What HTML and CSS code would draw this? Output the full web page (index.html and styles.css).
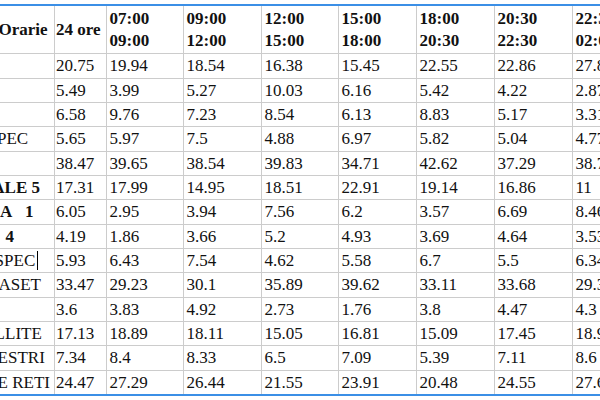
FILE: index.html
```html
<!DOCTYPE html>
<html lang="it">
<head>
<meta charset="utf-8">
<title>Share per fascia oraria</title>
<link rel="stylesheet" href="styles.css">
</head>
<body>
<div class="sheet">
  <table class="grid">
    <colgroup>
      <col class="c-label">
      <col class="c-day">
      <col class="c-slot">
      <col class="c-slot-w">
      <col class="c-slot">
      <col class="c-slot-w">
      <col class="c-slot-w">
      <col class="c-slot-w">
      <col class="c-slot-w">
    </colgroup>
    <thead>
      <tr>
        <th class="label cut-1">Orarie</th>
        <th class="day">24 ore</th>
        <th>07:00<br>09:00</th>
        <th>09:00<br>12:00</th>
        <th>12:00<br>15:00</th>
        <th>15:00<br>18:00</th>
        <th>18:00<br>20:30</th>
        <th>20:30<br>22:30</th>
        <th>22:30<br>02:00</th>
      </tr>
    </thead>
    <tbody>
      <tr><td class="label"></td><td class="day">20.75</td><td>19.94</td><td>18.54</td><td>16.38</td><td>15.45</td><td>22.55</td><td>22.86</td><td>27.81</td></tr>
      <tr><td class="label"></td><td class="day">5.49</td><td>3.99</td><td>5.27</td><td>10.03</td><td>6.16</td><td>5.42</td><td>4.22</td><td>2.87</td></tr>
      <tr><td class="label"></td><td class="day">6.58</td><td>9.76</td><td>7.23</td><td>8.54</td><td>6.13</td><td>8.83</td><td>5.17</td><td>3.31</td></tr>
      <tr><td class="label cut-3">PEC</td><td class="day">5.65</td><td>5.97</td><td>7.5</td><td>4.88</td><td>6.97</td><td>5.82</td><td>5.04</td><td>4.77</td></tr>
      <tr><td class="label"></td><td class="day">38.47</td><td>39.65</td><td>38.54</td><td>39.83</td><td>34.71</td><td>42.62</td><td>37.29</td><td>38.76</td></tr>
      <tr><td class="label strong cut-8">ALE 5</td><td class="day">17.31</td><td>17.99</td><td>14.95</td><td>18.51</td><td>22.91</td><td>19.14</td><td>16.86</td><td>11</td></tr>
      <tr><td class="label strong wide-gap">A 1</td><td class="day">6.05</td><td>2.95</td><td>3.94</td><td>7.56</td><td>6.2</td><td>3.57</td><td>6.69</td><td>8.46</td></tr>
      <tr><td class="label strong indent">4</td><td class="day">4.19</td><td>1.86</td><td>3.66</td><td>5.2</td><td>4.93</td><td>3.69</td><td>4.64</td><td>3.53</td></tr>
      <tr><td class="label cut-5">SPEC<span class="caret"></span></td><td class="day">5.93</td><td>6.43</td><td>7.54</td><td>4.62</td><td>5.58</td><td>6.7</td><td>5.5</td><td>6.34</td></tr>
      <tr><td class="label cut-1">ASET</td><td class="day">33.47</td><td>29.23</td><td>30.1</td><td>35.89</td><td>39.62</td><td>33.11</td><td>33.68</td><td>29.34</td></tr>
      <tr><td class="label"></td><td class="day">3.6</td><td>3.83</td><td>4.92</td><td>2.73</td><td>1.76</td><td>3.8</td><td>4.47</td><td>4.3</td></tr>
      <tr><td class="label cut-5">LLITE</td><td class="day">17.13</td><td>18.89</td><td>18.11</td><td>15.05</td><td>16.81</td><td>15.09</td><td>17.45</td><td>18.93</td></tr>
      <tr><td class="label cut-2">ESTRI</td><td class="day">7.34</td><td>8.4</td><td>8.33</td><td>6.5</td><td>7.09</td><td>5.39</td><td>7.11</td><td>8.6</td></tr>
      <tr><td class="label cut-2">E RETI</td><td class="day">24.47</td><td>27.29</td><td>26.44</td><td>21.55</td><td>23.91</td><td>20.48</td><td>24.55</td><td>27.62</td></tr>
    </tbody>
  </table>
</div>
</body>
</html>
```

FILE: styles.css
```css
html, body {
  margin: 0;
  padding: 0;
  background: #ffffff;
}

body {
  width: 600px;
  height: 400px;
  overflow: hidden;
  font-family: "Liberation Serif", "Times New Roman", serif;
  font-size: 17px;
  color: #111111;
}

.sheet {
  margin-top: 4px;
  width: 600px;
  overflow: hidden;
  border-top: 2px solid #3b8fe6;
  border-bottom: 2px solid #3b8fe6;
}

.grid {
  border-collapse: collapse;
  border-style: hidden;
  table-layout: fixed;
  width: 650px;
}

.c-label { width: 54px; }
.c-day { width: 52px; }
.c-slot { width: 77px; }
.c-slot-w { width: 78px; }

.grid th,
.grid td {
  border: 1px solid #cccccc;
  text-align: left;
  vertical-align: middle;
  white-space: nowrap;
  overflow: hidden;
  line-height: 21.35px;
}

.grid th {
  font-weight: bold;
  padding: 2.3px 3px;
}

.grid td {
  font-weight: normal;
  padding: 1px 3px;
}

.grid .label {
  padding-left: 0;
  padding-right: 0;
}

.grid .day {
  padding-left: 1.5px;
}

.grid .strong {
  font-weight: bold;
}

/* label texts are clipped at the left edge of the view */
.grid .cut-1 { text-indent: -1.5px; }
.grid .cut-2 { text-indent: -2.4px; }
.grid .cut-3 { text-indent: -3px; }
.grid .cut-5 { text-indent: -5.4px; }
.grid .cut-8 { text-indent: -7.7px; }

.grid .wide-gap {
  text-indent: 0;
  word-spacing: 9.5px;
}

.grid .indent {
  padding-left: 5.5px;
}

.caret {
  display: inline-block;
  width: 1px;
  height: 19px;
  margin-left: 1.5px;
  background: #000000;
  vertical-align: -4px;
}
```
